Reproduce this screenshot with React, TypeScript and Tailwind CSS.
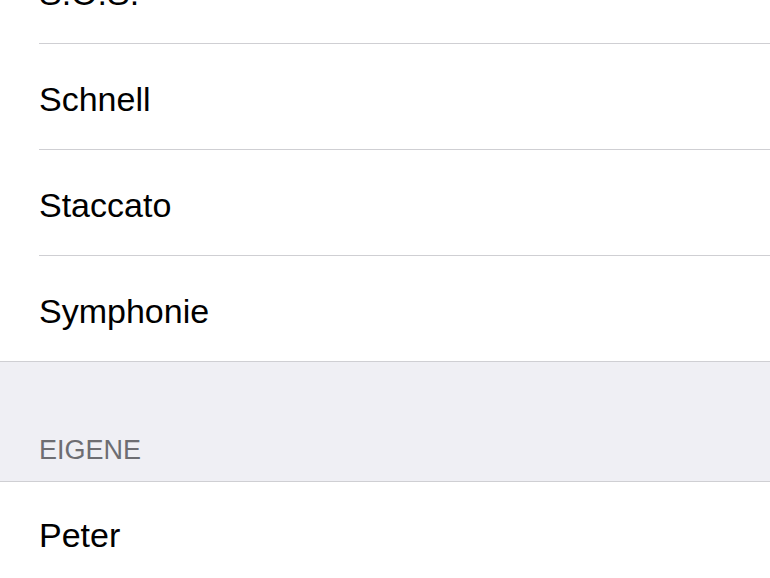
import React from 'react';

const topItems = ['S.O.S.', 'Schnell', 'Staccato'];

function Row({ label, inset = true }: { label: string; inset?: boolean }) {
  return (
    <div className="pl-[39px] bg-white">
      <div
        className={
          inset
            ? 'h-[106px] flex items-center pt-[4px] border-b border-[#cfcfd3] text-[34px] leading-none text-black'
            : 'h-[105px] flex items-center pt-[4px] text-[34px] leading-none text-black'
        }
      >
        {label}
      </div>
    </div>
  );
}

export default function App() {
  return (
    <div className="w-[770px] h-[578px] overflow-hidden bg-white font-['Liberation_Sans',Arial,sans-serif]">
      <div className="-mt-[62px]">
        {/* system tones */}
        {topItems.map((t) => (
          <Row key={t} label={t} />
        ))}
        <Row label="Symphonie" inset={false} />

        {/* section header */}
        <div className="h-[121px] bg-[#efeff4] border-y border-[#cfcfd3] flex items-end pl-[39px] pb-[17px]">
          <span className="text-[27px] leading-none text-[#6d6d72] uppercase">Eigene</span>
        </div>

        <div className="pl-[39px] bg-white">
          <div className="h-[106px] flex items-center text-[34px] leading-none text-black">
            Peter
          </div>
        </div>
      </div>
    </div>
  );
}
